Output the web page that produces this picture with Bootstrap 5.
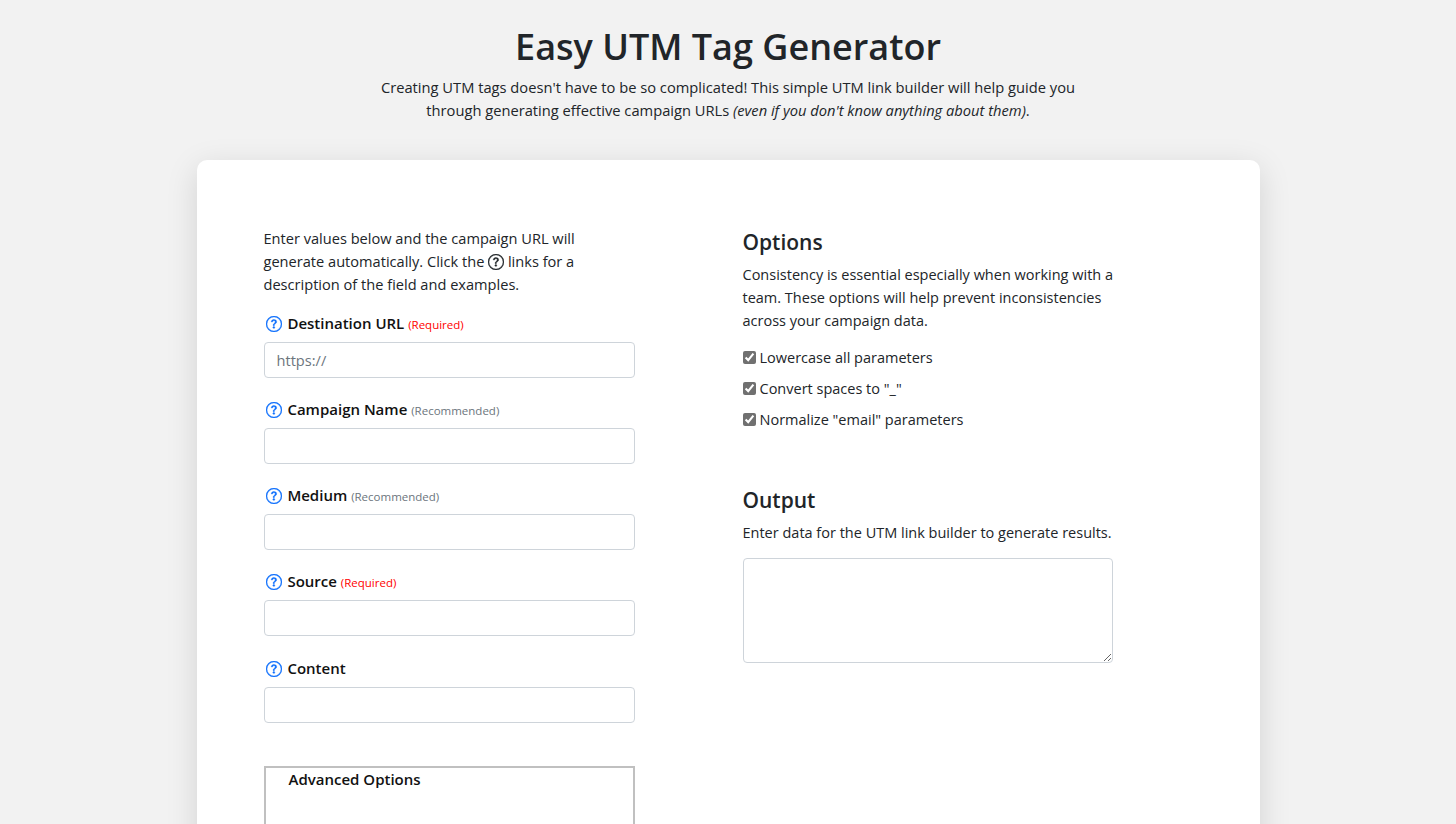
<!DOCTYPE html>
<html lang="en">
<head>
  <meta charset="UTF-8" />
  <title>Easy UTM Tag Generator</title>
  <meta name="viewport" content="width=device-width, initial-scale=1" />
  <link href="https://cdn.jsdelivr.net/npm/bootstrap@5.3.3/dist/css/bootstrap.min.css" rel="stylesheet" />
  <style>
    body { background: #f2f2f2; color: #212529; font-family: "Open Sans", "Noto Sans", sans-serif; font-size: 14.6px; line-height: 23px; }
    .page-head { padding-top: 23px; height: 160px; }
    .page-head h1 { font-size: 36px; font-weight: 600; line-height: 48px; margin-bottom: 5px; }
    .page-head p { width: 720px; margin: 0 auto; font-size: 14.7px; }
    .tool-card { width: 1063px; margin: 0 auto; background: #fff; border-radius: 10px; box-shadow: 0 8px 32px rgba(0,0,0,.13); padding: 67px 67px 80px; }
    .left-col { width: 371px; margin-right: 108px; }
    .right-col { width: 380px; padding-top: 1px; font-size: 14.5px; }
    .intro { width: 330px; margin-bottom: 16px; }
    .field { margin-bottom: 20.15px; }
    .field-label { height: 25px; margin-bottom: 5px; padding-left: 2px; font-size: 15px; font-weight: 600; color: #111; }
    .field-label small { font-size: 11.5px; font-weight: 400; }
    .q-icon { width: 16px; height: 16px; fill: currentColor; stroke: currentColor; stroke-width: .35; vertical-align: -3px; }
    .field-label .q-icon { margin-right: 2px; color: #0d6efd; }
    .req { color: #ff0000; }
    .rec { color: #6c757d; }
    .form-control { height: 36px; border-color: #ced4da; border-radius: 4px; font-size: 14.6px; }
    .form-control::placeholder { color: #6c757d; }
    .tool-textarea { width: 370px; height: 105px; border: 1px solid #ced4da; border-radius: 4px; display: block; }
    .adv-box { border: 2px solid #c0c0c0; height: 240px; margin-top: 43px; padding: 0 23px; }
    .adv-box legend { font-size: 15px; font-weight: 600; line-height: 22px; margin: 0; color: #111; }
    .right-col h2 { font-size: 21px; font-weight: 600; line-height: 28px; margin-bottom: 7px; }
    .opt-row { height: 31px; }
    .opt-row input { width: 13px; height: 13px; margin: 0 4px 0 0; accent-color: #707070; }
    .options-text { margin-bottom: 10px; }
    .right-col .out-head { margin-top: 51px; margin-bottom: 7px; }
    .output-text { margin-bottom: 14px; }
  </style>
</head>
<body>
  <svg class="d-none">
    <symbol id="q-circle" viewBox="0 0 16 16"><path d="M8 15A7 7 0 1 1 8 1a7 7 0 0 1 0 14zm0 1A8 8 0 1 0 8 0a8 8 0 0 0 0 16z"/><path d="M5.255 5.786a.237.237 0 0 0 .241.247h.825c.138 0 .248-.113.266-.25.09-.656.54-1.134 1.342-1.134.686 0 1.314.343 1.314 1.168 0 .635-.374.927-.965 1.371-.673.489-1.206 1.06-1.168 1.987l.003.217a.25.25 0 0 0 .25.246h.811a.25.25 0 0 0 .25-.25v-.105c0-.718.273-.927 1.01-1.486.609-.463 1.244-.977 1.244-2.056 0-1.511-1.276-2.241-2.673-2.241-1.267 0-2.655.59-2.75 2.286zm1.557 5.763c0 .533.425.927 1.01.927.609 0 1.028-.394 1.028-.927 0-.552-.42-.94-1.029-.94-.584 0-1.009.388-1.009.94z"/></symbol>
  </svg>

  <div class="page-head text-center">
    <h1>Easy UTM Tag Generator</h1>
    <p>Creating UTM tags doesn't have to be so complicated! This simple UTM link builder will help guide you through generating effective campaign URLs <em>(even if you don't know anything about them)</em>.</p>
  </div>

  <div class="tool-card">
    <div class="d-flex">
      <div class="left-col">
        <p class="intro">Enter values below and the campaign URL will generate automatically. Click the
          <svg class="q-icon"><use href="#q-circle"></use></svg>
          links for a description of the field and examples.</p>

        <div class="field">
          <div class="field-label">
            <svg class="q-icon"><use href="#q-circle"></use></svg>
            Destination URL <small class="req">(Required)</small>
          </div>
          <input type="text" class="form-control" placeholder="https://" />
        </div>

        <div class="field">
          <div class="field-label">
            <svg class="q-icon"><use href="#q-circle"></use></svg>
            Campaign Name <small class="rec">(Recommended)</small>
          </div>
          <input type="text" class="form-control" />
        </div>

        <div class="field">
          <div class="field-label">
            <svg class="q-icon"><use href="#q-circle"></use></svg>
            Medium <small class="rec">(Recommended)</small>
          </div>
          <input type="text" class="form-control" />
        </div>

        <div class="field">
          <div class="field-label">
            <svg class="q-icon"><use href="#q-circle"></use></svg>
            Source <small class="req">(Required)</small>
          </div>
          <input type="text" class="form-control" />
        </div>

        <div class="field">
          <div class="field-label">
            <svg class="q-icon"><use href="#q-circle"></use></svg>
            Content
          </div>
          <input type="text" class="form-control" />
        </div>

        <fieldset class="adv-box">
          <legend>Advanced Options</legend>
        </fieldset>
      </div>

      <div class="right-col">
        <h2>Options</h2>
        <p class="options-text">Consistency is essential especially when working with a team. These options will help prevent inconsistencies across your campaign data.</p>
        <label class="d-flex align-items-center opt-row"><input type="checkbox" checked /> Lowercase all parameters</label>
        <label class="d-flex align-items-center opt-row"><input type="checkbox" checked /> Convert spaces to "_"</label>
        <label class="d-flex align-items-center opt-row"><input type="checkbox" checked /> Normalize "email" parameters</label>

        <h2 class="out-head">Output</h2>
        <p class="output-text">Enter data for the UTM link builder to generate results.</p>
        <textarea class="tool-textarea"></textarea>
      </div>
    </div>
  </div>
</body>
</html>
